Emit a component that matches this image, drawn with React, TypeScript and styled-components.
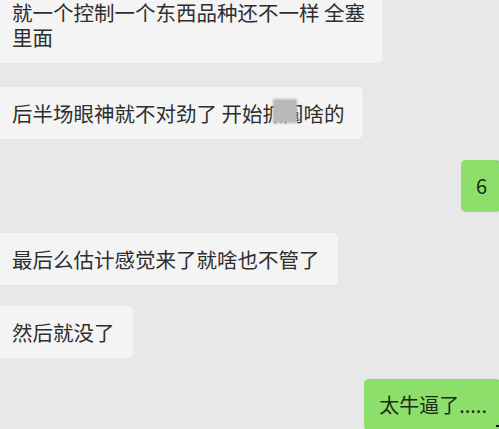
import React from "react";
import styled, { createGlobalStyle } from "styled-components";

const Global = createGlobalStyle`
  html, body {
    margin: 0;
    padding: 0;
    background: #e8e8e8;
    overflow: hidden;
  }
  body {
    width: 499px;
    height: 429px;
    font-family: "Noto Sans CJK SC", "Noto Sans", sans-serif;
  }
`;

const Screen = styled.div`
  width: 499px;
  height: 429px;
  overflow: hidden;
  background: #e8e8e8;
`;

const Feed = styled.div`
  display: flex;
  flex-direction: column;
  gap: 21px;
  margin-top: -13px;
`;

const Bubble = styled.div<{ $mine?: boolean; $extraGap?: number; $tight?: boolean }>`
  position: relative;
  align-self: ${(p) => (p.$mine ? "flex-end" : "flex-start")};
  margin: ${(p) => (p.$mine ? "0 -2px 0 0" : "0 0 0 -6px")};
  margin-bottom: ${(p) => p.$extraGap ?? 0}px;
  padding: ${(p) => (p.$mine ? "13px 14px 13px 15px" : "13px 18px 13px 18px")};
  background: ${(p) => (p.$mine ? "#8ddf6c" : "#f4f4f4")};
  color: ${(p) => (p.$mine ? "#1f2a18" : "#2e2e2e")};
  border-radius: 5px;
  font-size: ${(p) => (p.$mine ? "20px" : "20.5px")};
  line-height: ${(p) => (p.$tight ? "25px" : "26px")};
  white-space: nowrap;
  box-shadow: 0 0 2px rgba(0, 0, 0, 0.03);
`;

const Masked = styled.span`
  position: relative;
  &::after {
    content: "";
    position: absolute;
    left: 10px;
    top: 1px;
    width: 24px;
    height: 24px;
    background: #b9b9b9;
    filter: blur(1px);
  }
`;

const Mark = styled.span`
  position: absolute;
  right: 2px;
  bottom: 4px;
  width: 3px;
  height: 2px;
  background: #111;
`;

export default function App() {
  return (
    <Screen>
      <Global />
      <Feed>
        <Bubble $extraGap={3} $tight>
          就一个控制一个东西品种还不一样 全塞
          <br />
          里面
        </Bubble>
        <Bubble>
          后半场眼神就不对劲了 开始<Masked>抓</Masked>阄啥的
        </Bubble>
        <Bubble $mine>6</Bubble>
        <Bubble>最后么估计感觉来了就啥也不管了</Bubble>
        <Bubble>然后就没了</Bubble>
        <Bubble $mine>
          太牛逼了.....
          <Mark />
        </Bubble>
      </Feed>
    </Screen>
  );
}
